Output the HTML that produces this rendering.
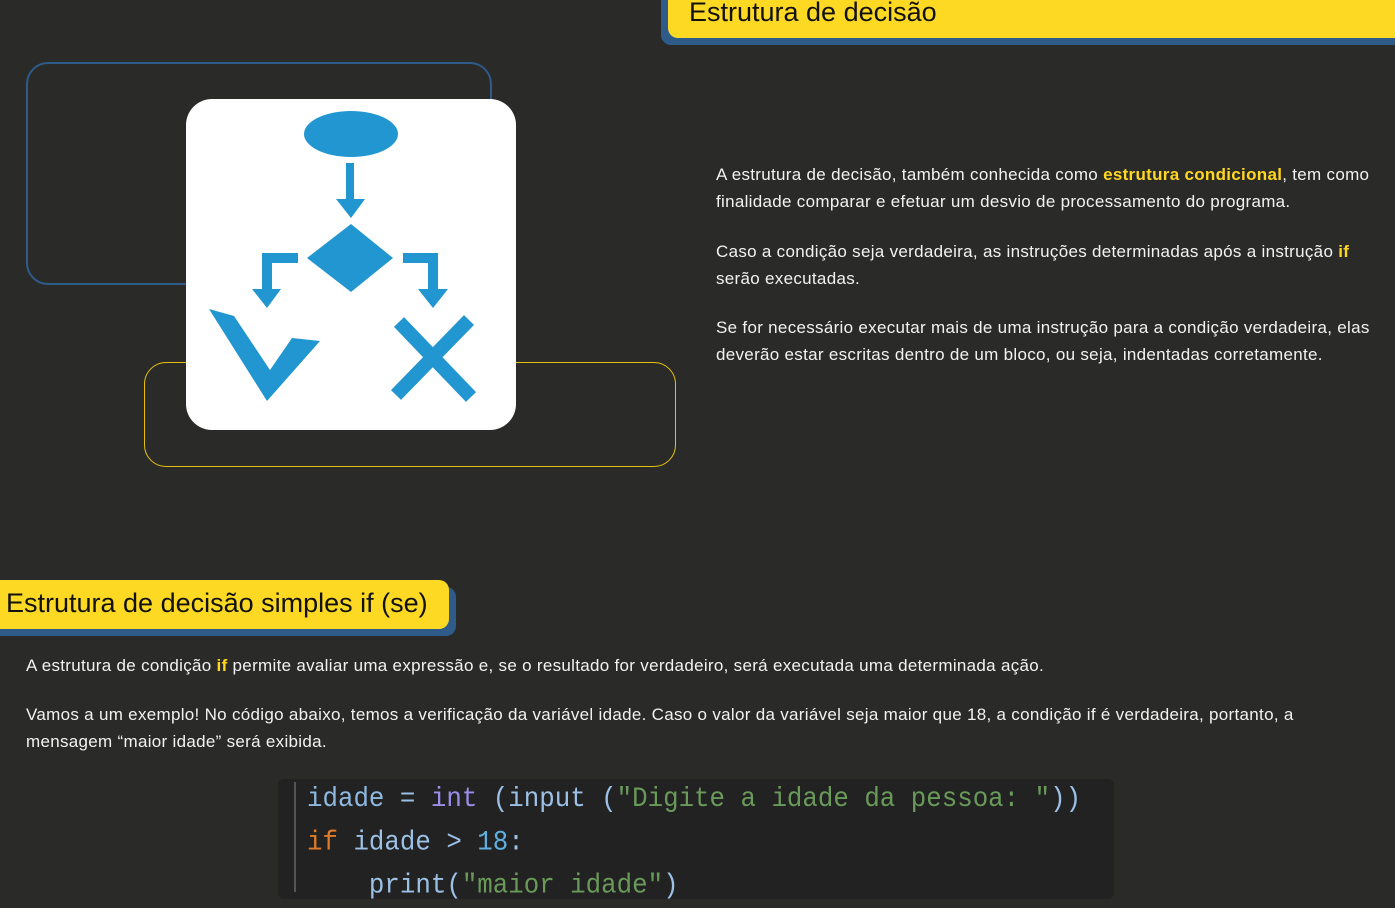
<!DOCTYPE html>
<html><head><meta charset="utf-8"><style>
body{margin:0;width:1395px;height:883px;overflow:hidden;background:#2a2b28;font-family:"Liberation Sans",sans-serif;color:#f2f2f2;position:relative}
.a{position:absolute}
p{margin:0}
.t{font-size:17px;line-height:27px;letter-spacing:0.3px}
.y{color:#ffd620}
.code{font-family:"Liberation Mono",monospace;font-size:26px;line-height:40px;white-space:pre;transform:scaleY(1.08);transform-origin:0 0}
</style></head><body>
<div class="a" style="left:661px;top:-10px;width:740px;height:55px;background:#2e5b8a;border-radius:0 0 0 10px"></div>
<div class="a" style="left:668px;top:-10px;width:730px;height:48px;background:#fdd923;border-radius:0 0 0 10px"></div>
<div class="a" style="left:689px;top:-3px;font-size:27px;color:#111">Estrutura de decisão</div>

<div class="a" style="left:26px;top:62px;width:462px;height:219px;border:2px solid #2e5b8a;border-radius:22px"></div>
<div class="a" style="left:144px;top:362px;width:530px;height:103px;border:1.5px solid #e6c00c;border-radius:22px"></div>
<div class="a" style="left:186px;top:99px;width:330px;height:331px;background:#fff;border-radius:26px"></div>
<svg class="a" style="left:186px;top:99px" width="330" height="331" viewBox="186 99 330 331">
<g fill="#2196d0">
<ellipse cx="351" cy="134" rx="47" ry="23"/>
<rect x="346" y="163" width="8" height="38"/>
<polygon points="336,199 365,199 351,218"/>
<polygon points="351,224 393,258 351,292 307,258"/>
<polygon points="298,253 298,263 272,263 272,292 262,292 262,253"/>
<polygon points="252,289 281,289 267,308"/>
<polygon points="403,253 403,263 428,263 428,292 438,292 438,253"/>
<polygon points="418,289 448,289 433,308"/>
<polygon points="209,309 234,316 270,370 292,338 320,341 267,401"/>
</g>
<g stroke="#2196d0" stroke-width="14">
<line x1="399" y1="322" x2="471" y2="397"/>
<line x1="469" y1="320" x2="396" y2="395"/>
</g></svg>

<div class="a t" style="left:716px;top:161px;width:675px">
<p>A estrutura de decisão, também conhecida como <b class="y">estrutura condicional</b>, tem como finalidade comparar e efetuar um desvio de processamento do programa.</p>
<p style="margin-top:23px">Caso a condição seja verdadeira, as instruções determinadas após a instrução <b class="y">if</b> serão executadas.</p>
<p style="margin-top:22px">Se for necessário executar mais de uma instrução para a condição verdadeira, elas deverão estar escritas dentro de um bloco, ou seja, indentadas corretamente.</p>
</div>

<div class="a" style="left:-10px;top:587px;width:466px;height:49px;background:#2e5b8a;border-radius:0 10px 10px 0"></div>
<div class="a" style="left:-10px;top:580px;width:459px;height:49px;background:#fdd923;border-radius:0 10px 10px 0"></div>
<div class="a" style="left:6px;top:588px;font-size:27px;color:#111">Estrutura de decisão simples if (se)</div>

<div class="a t" style="left:26px;top:652px;width:1290px">
<p>A estrutura de condição <b class="y">if</b> permite avaliar uma expressão e, se o resultado for verdadeiro, será executada uma determinada ação.</p>
<p style="margin-top:22px">Vamos a um exemplo! No código abaixo, temos a verificação da variável idade. Caso o valor da variável seja maior que 18, a condição if é verdadeira, portanto, a mensagem “maior idade” será exibida.</p>
</div>

<div class="a" style="left:278px;top:779px;width:836px;height:120px;background:#212221;border-radius:6px"></div>
<div class="a" style="left:294px;top:782px;width:2px;height:110px;background:#555"></div>
<div class="a code" style="left:307px;top:778px;color:#9cc0e6;font-size:25.8px"><span style="color:#8fb8e0">idade</span> = <span style="color:#9b8ee8">int</span> (input (<span style="color:#6a9a5a">"Digite a idade da pessoa: "</span>))
<span style="color:#e07b2a">if</span> idade &gt; <span style="color:#5fb0e0">18</span>:
    print(<span style="color:#6a9a5a">"maior idade"</span>)</div>
</body></html>
